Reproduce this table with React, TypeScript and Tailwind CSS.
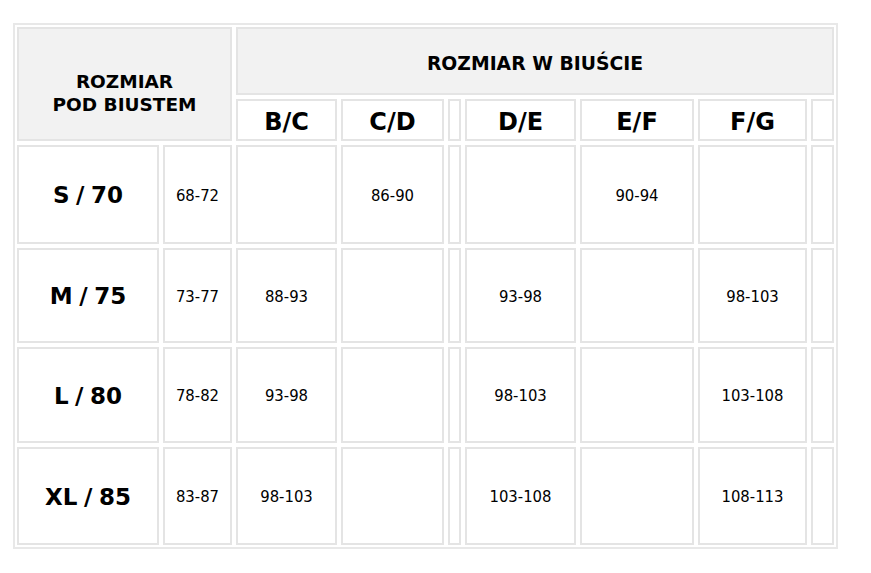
import React from 'react';

const cupCols = ['B/C', 'C/D', '', 'D/E', 'E/F', 'F/G', ''];

const rows: { size: string; under: string; values: string[] }[] = [
  { size: 'S / 70', under: '68-72', values: ['', '86-90', '', '', '90-94', '', ''] },
  { size: 'M / 75', under: '73-77', values: ['88-93', '', '', '93-98', '', '98-103', ''] },
  { size: 'L / 80', under: '78-82', values: ['93-98', '', '', '98-103', '', '103-108', ''] },
  { size: 'XL / 85', under: '83-87', values: ['98-103', '', '', '103-108', '', '108-113', ''] },
];

const cell = 'flex items-center justify-center border-2 border-[#e4e4e4] text-black';
const bold = 'font-["DejaVu_Sans",sans-serif] font-bold';
const num = 'font-["DejaVu_Sans_Condensed","DejaVu_Sans",sans-serif] text-[16.5px] pt-[3px]';

export default function App() {
  return (
    <div className="min-h-screen bg-white pl-[13px] pt-[23px]">
      <div className="w-fit border-2 border-[#e8e8e8] p-[2px]">
        <div className="grid grid-cols-[142px_69px_101px_103px_13px_111px_114px_109px_23px] grid-rows-[68px_42px_99px_95px_96px_98px] gap-1">
          {/* Header - left */}
          <div
            className={`${cell} col-span-2 row-span-2 bg-[#f2f2f2] pt-[18px] text-center text-[18.5px] leading-[23px] ${bold}`}
          >
            ROZMIAR
            <br />
            POD BIUSTEM
          </div>

          {/* Header - right */}
          <div className={`${cell} col-span-7 bg-[#f2f2f2] pt-[6px] text-[18.8px] ${bold}`}>
            ROZMIAR W BIUŚCIE
          </div>

          {cupCols.map((c, i) => (
            <div key={i} className={`${cell} bg-white pt-[3px] text-[24px] ${bold}`}>
              {c}
            </div>
          ))}

          {/* Body */}
          {rows.map((r) => (
            <React.Fragment key={r.size}>
              <div className={`${cell} bg-white pt-[2px] text-[23px] [word-spacing:-1.5px] ${bold}`}>{r.size}</div>
              <div className={`${cell} bg-white ${num}`}>{r.under}</div>
              {r.values.map((v, i) => (
                <div key={i} className={`${cell} bg-white ${num}`}>
                  {v}
                </div>
              ))}
            </React.Fragment>
          ))}
        </div>
      </div>
    </div>
  );
}
